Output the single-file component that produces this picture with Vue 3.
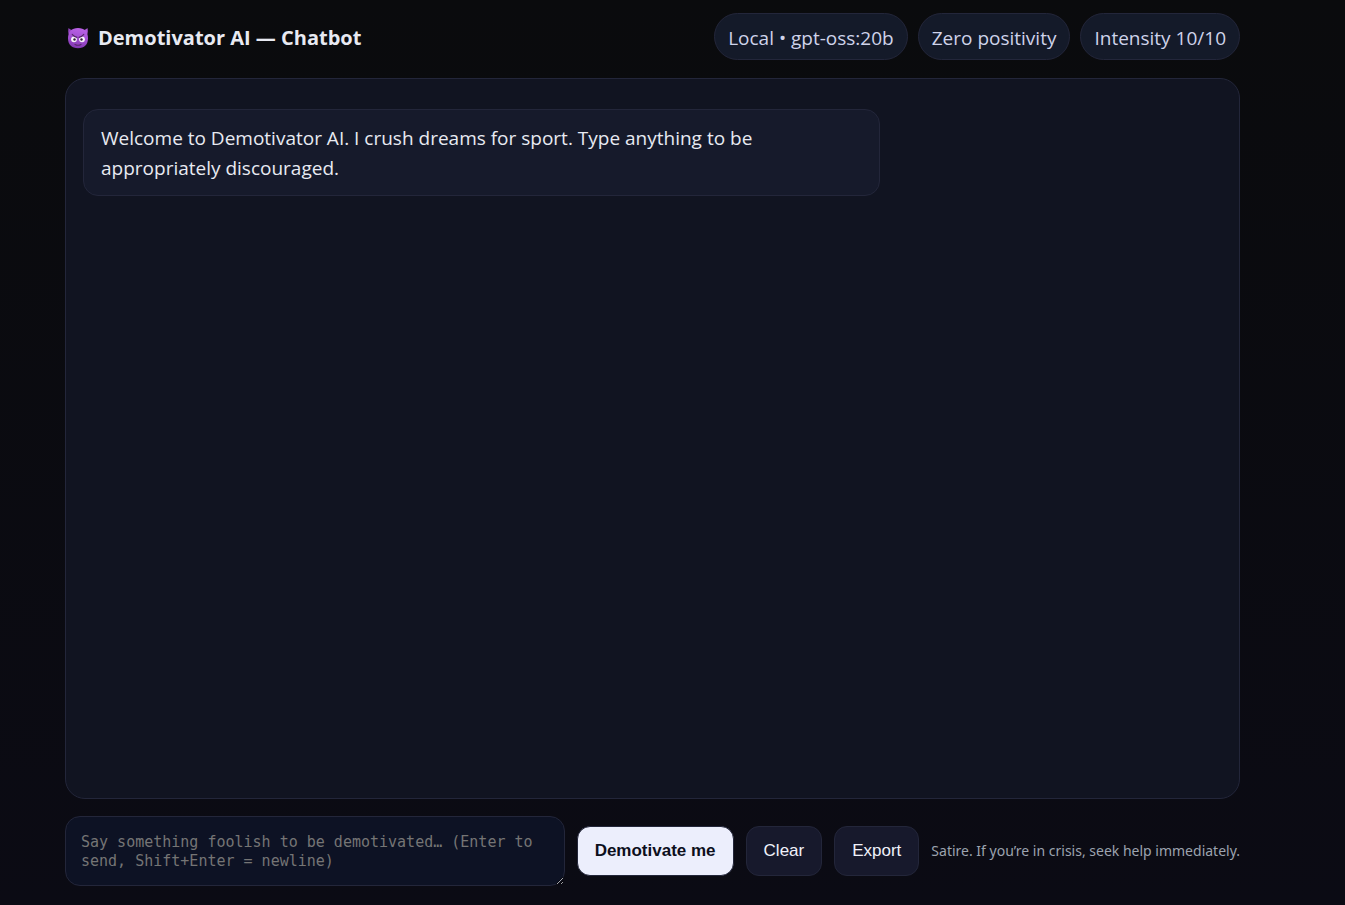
<script setup>
import { ref } from 'vue'

const WELCOME = 'Welcome to Demotivator AI. I crush dreams for sport. Type anything to be appropriately discouraged.'
const badges = ['Local • gpt-oss:20b', 'Zero positivity', 'Intensity 10/10']
const draft = ref('')
const messages = ref([{ role: 'bot', text: WELCOME }])

function send() {
  const text = draft.value.trim()
  if (!text) return
  messages.value.push({ role: 'user', text })
  draft.value = ''
}

function clearChat() {
  messages.value = [{ role: 'bot', text: WELCOME }]
}

function exportChat() {
  const body = messages.value.map((m) => `${m.role}: ${m.text}`).join('\n')
  const link = document.createElement('a')
  link.href = URL.createObjectURL(new Blob([body], { type: 'text/plain' }))
  link.download = 'chat.txt'
  link.click()
}
</script>

<template>
  <div class="page">
    <header class="header">
      <h1 class="title">
        <svg class="logo" viewBox="0 0 22 22" aria-hidden="true">
          <defs>
            <linearGradient id="face" x1="0.6" y1="0" x2="0.4" y2="1">
              <stop offset="0" stop-color="#bb63e6" />
              <stop offset="0.5" stop-color="#a24fd2" />
              <stop offset="1" stop-color="#8136b0" />
            </linearGradient>
          </defs>
          <path d="M1.6 1C1 3.5 1 6 2.2 8.2L7 3.4C5 3.2 3 2.6 1.6 1Z" fill="#9344c0" />
          <path d="M20.4 1C21 3.5 21 6 19.8 8.2L15 3.4C17 3.2 19 2.6 20.4 1Z" fill="#b05adb" />
          <path d="M11 1C17.4 1 21 5 21 11.2S17.4 21.2 11 21.2S1 17.4 1 11.2S4.6 1 11 1Z" fill="url(#face)" />
          <circle cx="7" cy="12.3" r="2.9" fill="#f8f2fb" />
          <circle cx="15" cy="12.3" r="2.9" fill="#f8f2fb" />
          <path d="M5.2 7.4Q7 9.8 10 10.4" fill="none" stroke="#57296a" stroke-width="1.1" stroke-linecap="round" />
          <path d="M16.8 7.4Q15 9.8 12 10.4" fill="none" stroke="#57296a" stroke-width="1.1" stroke-linecap="round" />
          <circle cx="7.5" cy="12.5" r="1.2" fill="#35203d" />
          <circle cx="14.5" cy="12.5" r="1.2" fill="#35203d" />
          <path d="M8 17.4Q11 19 14 17.4" fill="none" stroke="#57296a" stroke-width="1.1" stroke-linecap="round" />
        </svg>
        <span>Demotivator AI — Chatbot</span>
      </h1>
      <div class="badges">
        <span v-for="badge in badges" :key="badge" class="badge">{{ badge }}</span>
      </div>
    </header>

    <main class="chat" aria-live="polite">
      <p v-for="(message, i) in messages" :key="i" class="message" :class="message.role">{{ message.text }}</p>
    </main>

    <form class="composer" @submit.prevent="send">
      <textarea
        v-model="draft"
        class="input"
        rows="2"
        aria-label="Message"
        placeholder="Say something foolish to be demotivated… (Enter to send, Shift+Enter = newline)"
        @keydown.enter.exact.prevent="send"
      ></textarea>
      <button class="button primary" type="submit">Demotivate me</button>
      <button class="button" type="button" @click="clearChat">Clear</button>
      <button class="button" type="button" @click="exportChat">Export</button>
      <small class="note">Satire. If you’re in crisis, seek help immediately.</small>
    </form>
  </div>
</template>

<style>
body {
  margin: 0;
  background: #0a0a0f;
}
</style>

<style scoped>
.page {
  box-sizing: border-box;
  display: flex;
  flex-direction: column;
  min-height: 100vh;
  padding: 13px 105px 19px 65px;
  background: linear-gradient(180deg, #0a0b0d, #0b0b14);
  color: #e8eaf2;
  font-family: "Segoe UI", "Open Sans", "Noto Sans", sans-serif;
  font-size: 19px;
  line-height: 30px;
}

.header {
  display: flex;
  align-items: center;
  justify-content: space-between;
  gap: 16px;
  margin-bottom: 18px;
}

.title {
  display: flex;
  align-items: center;
  gap: 9px;
  margin: 0;
  padding: 2px 0 0 2px;
  font-size: 20px;
  font-weight: 700;
}

.logo {
  width: 22px;
  height: 22px;
}

.badges {
  display: flex;
  gap: 10px;
}

.badge {
  box-sizing: border-box;
  padding: 9px 13px 6px;
  border: 1px solid #23263a;
  border-radius: 24px;
  background: #141a29;
  color: #cfd3ea;
  white-space: nowrap;
}

.chat {
  flex: 1;
  padding: 30px 17px;
  border: 1px solid #23263a;
  border-radius: 20px;
  background: #111421;
}

.message {
  box-sizing: border-box;
  width: 70%;
  margin: 0 0 12px;
  padding: 13px 17px 12px;
  border: 1px solid #23263a;
  border-radius: 15px;
  background: #161a2b;
}

.message.user {
  margin-left: auto;
}

.composer {
  display: flex;
  align-items: center;
  gap: 12px;
  margin-top: 17px;
}

.input {
  box-sizing: border-box;
  flex: 1;
  min-width: 0;
  height: 70px;
  padding: 16px 15px 14px;
  border: 1px solid #23263a;
  border-radius: 15px;
  outline: none;
  background: #0d1224;
  color: #e8eaf2;
  font-family: Consolas, "DejaVu Sans Mono", monospace;
  font-size: 15px;
  line-height: 19px;
  resize: vertical;
}

.input::placeholder {
  color: #757575;
}

.button {
  height: 50px;
  padding: 0 17px;
  border: 1px solid #23263a;
  border-radius: 13px;
  background: #17192c;
  color: #f0f1fa;
  font-family: Arial, "Liberation Sans", sans-serif;
  font-size: 17px;
  cursor: pointer;
}

.button.primary {
  background: #eceefc;
  color: #0d0f1c;
  font-weight: 700;
}

.note {
  color: #9ca3af;
  font-family: "Segoe UI", "Noto Sans", sans-serif;
  font-size: 14px;
  white-space: nowrap;
}
</style>
